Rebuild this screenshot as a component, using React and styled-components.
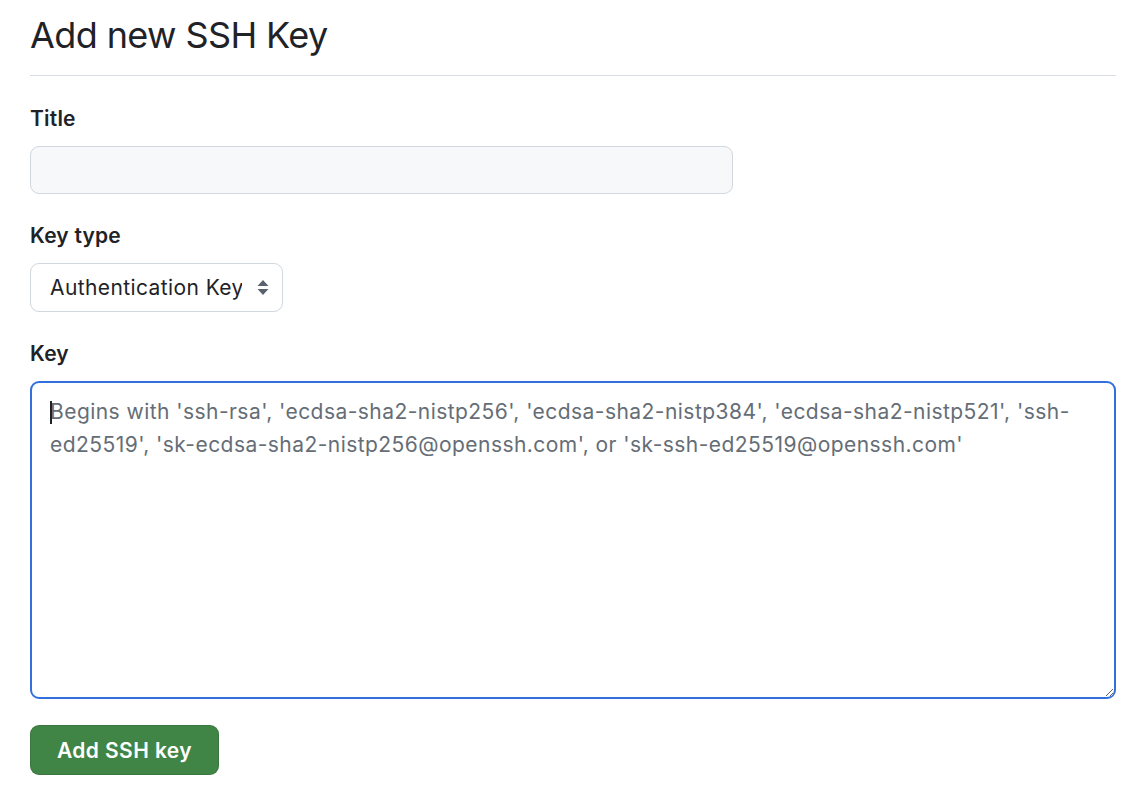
import styled, { createGlobalStyle } from 'styled-components'

const GlobalStyle = createGlobalStyle`
  body {
    margin: 0;
    background: #ffffff;
    font-family: Inter, "Liberation Sans", sans-serif;
    color: #1f2328;
  }
`;

const Page = styled.div`
  padding: 8px 16px 40px 30px;
  width: 1086px;
`;

const Subhead = styled.div`
  padding-bottom: 13px;
  border-bottom: 1px solid #d8dee4;
  margin-bottom: 27px;
`;

const Heading = styled.h2`
  margin: 0;
  font-size: 36px;
  line-height: 54px;
  font-weight: 400;
  letter-spacing: -0.6px;
  color: #1f2328;
`;

const Form = styled.form`
  display: flex;
  flex-direction: column;
  gap: 26px;
`;

const Group = styled.div`
  display: flex;
  flex-direction: column;
  gap: 12px;
  align-items: flex-start;
`;

const Label = styled.label`
  font-size: 21px;
  line-height: 31px;
  font-weight: 600;
  letter-spacing: 0.2px;
  color: #1f2328;
`;

const TextInput = styled.input`
  box-sizing: border-box;
  width: 703px;
  height: 48px;
  border: 1px solid #d0d7de;
  border-radius: 9px;
  background: #f6f8fa;
  padding: 0 18px;
  font: inherit;
  font-size: 21px;
  outline: none;
`;

const SelectWrap = styled.div`
  position: relative;
  display: inline-flex;
`;

const Select = styled.select`
  appearance: none;
  box-sizing: border-box;
  height: 49px;
  width: 253px;
  border: 1px solid #d0d7de;
  border-radius: 9px;
  background: #ffffff;
  padding: 0 40px 0 19px;
  font-family: inherit;
  font-size: 21px;
  letter-spacing: 0.4px;
  color: #1f2328;
  outline: none;
`;

const SelectArrow = styled.svg`
  position: absolute;
  right: 14px;
  top: 17px;
  pointer-events: none;
`;

const AreaWrap = styled.div`
  position: relative;
  width: 100%;
  display: flex;
`;

const TextArea = styled.textarea`
  box-sizing: border-box;
  width: 100%;
  height: 318px;
  border: 2px solid #3470dc;
  border-radius: 9px;
  padding: 12px 18px;
  font-family: inherit;
  font-size: 21px;
  line-height: 33px;
  letter-spacing: 0.45px;
  color: #1f2328;
  resize: vertical;
  outline: none;
  &::placeholder {
    color: #656d76;
  }
`;

const Caret = styled.span`
  position: absolute;
  left: 20px;
  top: 20px;
  width: 2px;
  height: 23px;
  background: #1f2328;
`;

const SubmitButton = styled.button`
  align-self: flex-start;
  height: 50px;
  padding: 0 26px;
  border: 1px solid rgba(31, 35, 40, 0.15);
  border-radius: 9px;
  background: #408546;
  color: #ffffff;
  font-family: inherit;
  font-size: 21px;
  font-weight: 600;
  letter-spacing: 0.4px;
  cursor: pointer;
`;

const placeholder =
  "Begins with 'ssh-rsa', 'ecdsa-sha2-nistp256', 'ecdsa-sha2-nistp384', 'ecdsa-sha2-nistp521', 'ssh-\ned25519', 'sk-ecdsa-sha2-nistp256@openssh.com', or 'sk-ssh-ed25519@openssh.com'";

function App() {
  return (
    <>
      <GlobalStyle />
      <Page>
        <Subhead>
          <Heading>Add new SSH Key</Heading>
        </Subhead>
        <Form onSubmit={(e) => e.preventDefault()}>
          <Group>
            <Label htmlFor="title">Title</Label>
            <TextInput id="title" type="text" />
          </Group>
          <Group>
            <Label htmlFor="type">Key type</Label>
            <SelectWrap>
              <Select id="type" defaultValue="auth">
                <option value="auth">Authentication Key</option>
                <option value="signing">Signing Key</option>
              </Select>
              <SelectArrow width="12" height="15" viewBox="0 0 12 15">
                <path d="M6 0 L11.5 6 H0.5 Z" fill="#59636e" />
                <path d="M6 15 L11.5 9 H0.5 Z" fill="#59636e" />
              </SelectArrow>
            </SelectWrap>
          </Group>
          <Group>
            <Label htmlFor="key">Key</Label>
            <AreaWrap>
              <TextArea id="key" placeholder={placeholder} />
              <Caret />
            </AreaWrap>
          </Group>
          <SubmitButton type="submit">Add SSH key</SubmitButton>
        </Form>
      </Page>
    </>
  )
}

export default App
